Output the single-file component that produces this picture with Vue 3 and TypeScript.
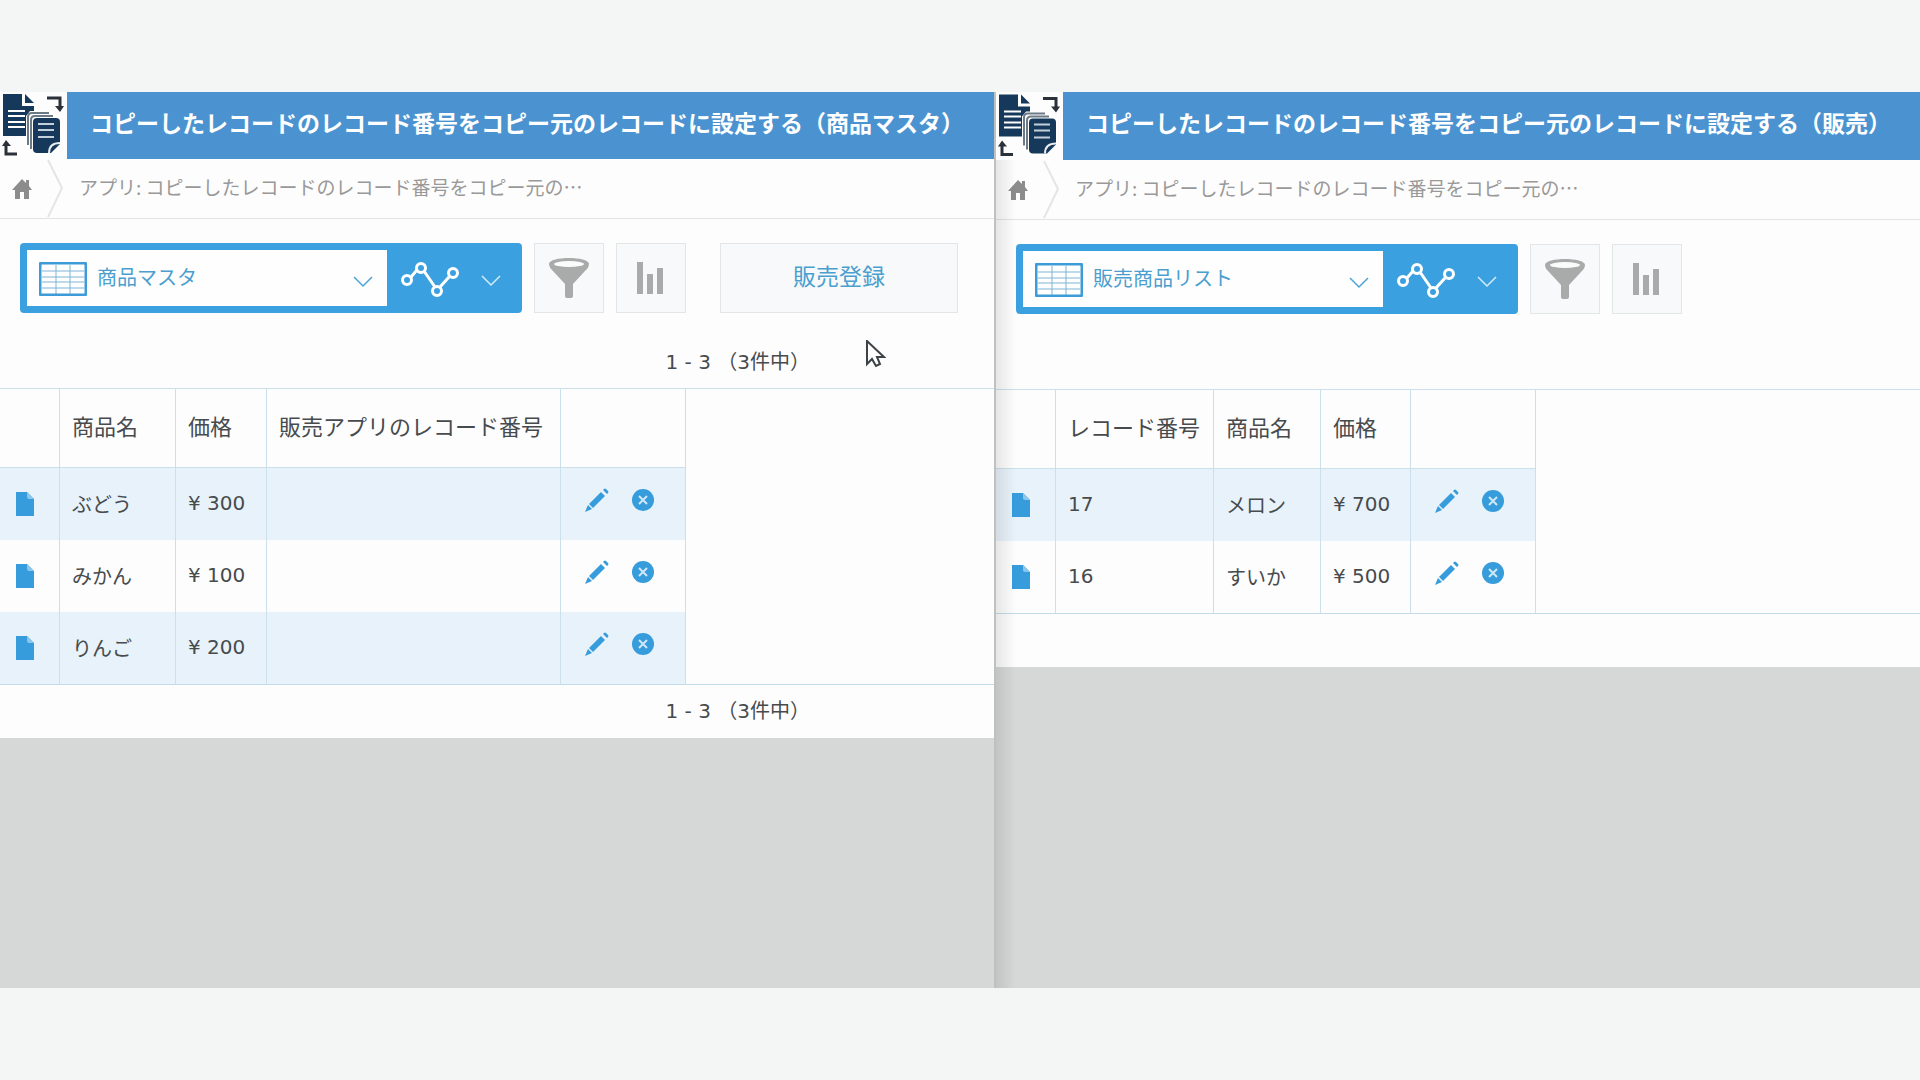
<script setup lang="ts">
interface Column {
  label: string
  width: number
}

interface Pane {
  id: string
  title: string
  view: string
  action?: string
  pager?: string
  columns: Column[]
  rows: string[][]
}

const crumb = 'アプリ: コピーしたレコードのレコード番号をコピー元の…'

const panes: Pane[] = [
  {
    id: 'master',
    title: 'コピーしたレコードのレコード番号をコピー元のレコードに設定する（商品マスタ）',
    view: '商品マスタ',
    action: '販売登録',
    pager: '1 - 3 （3件中）',
    columns: [
      { label: '商品名', width: 116 },
      { label: '価格', width: 91 },
      { label: '販売アプリのレコード番号', width: 294 },
    ],
    rows: [
      ['ぶどう', '¥ 300', ''],
      ['みかん', '¥ 100', ''],
      ['りんご', '¥ 200', ''],
    ],
  },
  {
    id: 'sales',
    title: 'コピーしたレコードのレコード番号をコピー元のレコードに設定する（販売）',
    view: '販売商品リスト',
    columns: [
      { label: 'レコード番号', width: 158 },
      { label: '商品名', width: 107 },
      { label: '価格', width: 90 },
    ],
    rows: [
      ['17', 'メロン', '¥ 700'],
      ['16', 'すいか', '¥ 500'],
    ],
  },
]
</script>

<template>
  <main class="page">
    <section v-for="pane in panes" :key="pane.id" class="pane" :class="pane.id">
      <div class="sheet">
        <header class="head">
          <svg class="logo" viewBox="0 0 67 67" aria-hidden="true">
            <path d="M3 2H22V14H34V44H3Z" fill="#16385a" />
            <path d="M25 2L34 11H25Z" fill="#16385a" />
            <path d="M8 19H25M8 24H25M8 30H25M8 35H25" stroke="#fff" stroke-width="2" />
            <path d="M30 19H53L62 27V50L50 63H35L26 54V24Z" fill="#fff" />
            <path d="M28 53V25Q28 21 32 21H49M31 57V28Q31 24 35 24H53" fill="none" stroke="#6c7a86" stroke-width="2" />
            <path d="M37 26H56Q60 26 60 30V52L51 61H37Q33 61 33 57V30Q33 26 37 26Z" fill="#16385a" />
            <path d="M49 61Q49 51 60 51" fill="none" stroke="#e8eef2" stroke-width="2" />
            <path d="M38 32H54M38 38H54M38 45H54" stroke="#c3d0da" stroke-width="2" />
            <path d="M47 6H60V15" fill="none" stroke="#2b3138" stroke-width="3" />
            <path d="M55 14H64L60 20Z" fill="#2b3138" />
            <path d="M17 62H6V53" fill="none" stroke="#2b3138" stroke-width="3" />
            <path d="M2 54H11L6 48Z" fill="#2b3138" />
          </svg>
          <h1 class="title">{{ pane.title }}</h1>
        </header>

        <nav class="crumbs">
          <a class="home" href="#" aria-label="ホーム">
            <svg viewBox="0 0 20 22" width="20" height="22" aria-hidden="true">
              <path d="M10 1L14 5V2H17V8L20 12H17V21H12V14H8V21H3V12H0Z" fill="#8c8c8c" />
            </svg>
          </a>
          <svg class="sep" viewBox="0 0 18 59" aria-hidden="true">
            <path d="M1 1L15 29L1 58" fill="none" stroke="#e4e6e6" stroke-width="2" />
          </svg>
          <a class="crumb" href="#">{{ crumb }}</a>
        </nav>

        <div class="tools">
          <div class="switcher">
            <label class="view">
              <svg width="48" height="34" viewBox="0 0 48 34" aria-hidden="true">
                <path d="M3 9H45M3 15H45M3 20H45M3 26H45M17 3V32M31 3V32" stroke="#7fb4d4" stroke-width="1" />
                <rect x="1" y="1" width="46" height="32" rx="2" fill="none" stroke="#3d9bd8" stroke-width="3" />
              </svg>
              <select class="picker" aria-label="一覧">
                <option>{{ pane.view }}</option>
              </select>
              <svg class="caret" width="20" height="20" viewBox="0 0 20 20" aria-hidden="true">
                <path d="M1 8L10 17L19 8" fill="none" stroke="#4ba3d6" stroke-width="1.5" />
              </svg>
            </label>
            <button class="graph" type="button" aria-label="グラフ">
              <svg width="60" height="40" viewBox="0 0 60 40" fill="none" stroke="#fff" aria-hidden="true">
                <path d="M11 19L17 12M24 13L35 29M40 29L49 19" stroke-width="3" />
                <circle cx="7" cy="22" r="4.5" stroke-width="3" />
                <circle cx="21" cy="10" r="4.5" stroke-width="3" />
                <circle cx="37" cy="33" r="4.5" stroke-width="3" />
                <circle cx="53" cy="15" r="4.5" stroke-width="3" />
              </svg>
              <svg width="20" height="20" viewBox="0 0 20 20" aria-hidden="true">
                <path d="M1 8L10 17L19 8" fill="none" stroke="#d4ecfa" stroke-width="1.5" />
              </svg>
            </button>
          </div>
          <button class="tool" type="button" aria-label="絞り込み">
            <svg width="42" height="42" viewBox="0 0 42 42" aria-hidden="true">
              <path d="M1 7C1 -1 41 -1 41 7C41 10 39 12 37 14L25 27V39Q25 41 23 41H19Q17 41 17 39V27L5 14C3 12 1 10 1 7Z" fill="#a9abab" />
              <ellipse cx="21" cy="7" rx="15" ry="3" fill="#fafbfb" />
            </svg>
          </button>
          <button class="tool" type="button" aria-label="集計">
            <svg width="28" height="34" viewBox="0 0 28 34" aria-hidden="true">
              <path d="M0 1H6V33H0ZM10 13H16V33H10ZM20 7H26V33H20Z" fill="#a9abab" />
            </svg>
          </button>
          <button v-if="pane.action" class="action" type="button">{{ pane.action }}</button>
        </div>

        <div class="pager top">{{ pane.pager }}</div>

        <div class="list">
          <table>
            <colgroup>
              <col class="icon-col" />
              <col v-for="c in pane.columns" :key="c.label" :style="{ width: c.width + 'px' }" />
              <col class="edit-col" />
            </colgroup>
            <thead>
              <tr>
                <th></th>
                <th v-for="c in pane.columns" :key="c.label" scope="col">{{ c.label }}</th>
                <th></th>
              </tr>
            </thead>
            <tbody>
              <tr v-for="(row, r) in pane.rows" :key="r">
                <td class="open">
                  <a href="#" aria-label="詳細">
                    <svg width="18" height="24" viewBox="0 0 18 24" aria-hidden="true">
                      <path d="M0 0H11L18 7V24H0Z" fill="#369cdc" />
                      <path d="M11 0L18 7H13Q11 7 11 5Z" fill="#8cc6ea" />
                    </svg>
                  </a>
                </td>
                <td v-for="(cell, i) in row" :key="i">{{ cell }}</td>
                <td>
                  <div class="edit">
                    <button type="button" aria-label="編集">
                      <svg width="24" height="24" viewBox="0 0 24 24" fill="#369cdc" aria-hidden="true">
                        <path d="M16 4L20 8L8 20L4 16Z" />
                        <path d="M18 2L19 1Q20 0 21 1L23 3Q24 4 23 5L22 6Z" />
                        <path d="M3 17L7 21L0 24Z" />
                      </svg>
                    </button>
                    <button type="button" aria-label="削除">
                      <svg width="24" height="24" viewBox="0 0 24 24" aria-hidden="true">
                        <circle cx="12" cy="12" r="11" fill="#369cdc" />
                        <path d="M8 8L16 16M16 8L8 16" stroke="#cfe8f7" stroke-width="2" />
                      </svg>
                    </button>
                  </div>
                </td>
              </tr>
            </tbody>
          </table>
        </div>

        <div class="pager">{{ pane.pager }}</div>
      </div>

      <svg v-if="pane.action" class="cursor" width="20" height="28" viewBox="0 0 20 28" aria-hidden="true">
        <path d="M1 1V24L6 19L10 26L14 24L11 17H18Z" fill="#fff" stroke="#3c4246" stroke-width="2" />
      </svg>
    </section>
  </main>
</template>

<style>
body {
  margin: 0;
  background: #f4f6f5;
}
</style>

<style scoped>
.page {
  box-sizing: border-box;
  min-height: 100vh;
  padding: 92px 0;
  display: grid;
  grid-template-columns: 994fr 926fr;
  background: #f4f6f5;
  color: #474b4d;
  font-family: "Noto Sans CJK JP", sans-serif;
  font-size: 20px;
}

.pane {
  position: relative;
  min-width: 0;
  background: #d6d8d7;
}

.pane.sales {
  border-left: 2px solid #bfc1c1;
}

.pane.sales::before {
  content: "";
  position: absolute;
  inset: 68px auto 0 0;
  width: 20px;
  background: linear-gradient(to right, rgba(0, 0, 0, 0.09), rgba(0, 0, 0, 0));
  pointer-events: none;
}

.sheet {
  background: #fdfdfd;
}

.head {
  display: flex;
  height: 67px;
  background: #4b93d0;
}

.sales .head {
  height: 68px;
}

.logo {
  flex: none;
  width: 67px;
  height: 100%;
  background: #fdfdfd;
}

.title {
  margin: 0;
  padding: 0 0 8px 23px;
  align-self: center;
  overflow: hidden;
  color: #fff;
  font-size: 23px;
  font-weight: 700;
  line-height: 32px;
  white-space: nowrap;
}

.crumbs {
  display: flex;
  align-items: center;
  height: 59px;
  border-bottom: 1px solid #e2e4e4;
  overflow: hidden;
}

.home {
  display: flex;
  padding: 0 15px 0 12px;
}

.sep {
  flex: none;
  width: 18px;
  height: 59px;
}

.crumb {
  padding: 0 0 4px 14px;
  color: #999;
  font-size: 19px;
  line-height: 28px;
  text-decoration: none;
  white-space: nowrap;
}

.tools {
  display: flex;
  padding: 24px 20px 0;
}

button {
  margin: 0;
  padding: 0;
  border: 0;
  background: none;
  font: inherit;
  cursor: pointer;
}

.switcher {
  box-sizing: border-box;
  display: flex;
  width: 502px;
  height: 70px;
  padding: 7px 0 7px 7px;
  border-radius: 4px;
  background: #3ba0df;
}

.view {
  box-sizing: border-box;
  display: flex;
  align-items: center;
  width: 360px;
  padding: 2px 14px 0 12px;
  background: #fefefe;
}

.picker {
  flex: 1;
  min-width: 0;
  height: 40px;
  margin: 0;
  padding: 0 0 6px 10px;
  border: 0;
  appearance: none;
  background: none;
  color: #4a9fce;
  font: inherit;
}

.caret {
  pointer-events: none;
}

.graph {
  display: flex;
  align-items: center;
  gap: 21px;
  padding-left: 13px;
}

.tool,
.action {
  box-sizing: border-box;
  display: flex;
  align-items: center;
  justify-content: center;
  height: 70px;
  border: 1px solid #e3e6e7;
  background: #f8f9fb;
}

.tool {
  width: 70px;
  margin-left: 12px;
}

.action {
  width: 238px;
  margin-left: 34px;
  padding-bottom: 6px;
  color: #4a9fce;
  font-size: 23px;
}

.pager {
  box-sizing: border-box;
  height: 53px;
  padding: 11px 184px 12px 0;
  font-family: "DejaVu Sans", "Noto Sans CJK JP", sans-serif;
  line-height: 30px;
  text-align: right;
}

.pager.top {
  height: 75px;
  padding-top: 34px;
}

.list {
  border-top: 1px solid #cbe0ea;
  border-bottom: 1px solid #c3dcea;
}

table {
  width: min-content;
  table-layout: fixed;
  border-collapse: separate;
  border-spacing: 0;
}

.icon-col {
  width: 60px;
}

.edit-col {
  width: 125px;
}

th,
td {
  box-sizing: border-box;
  padding: 0 0 2px 12px;
  border-right: 1px solid #cbe0ea;
  text-align: left;
  white-space: nowrap;
}

th {
  height: 79px;
  padding-bottom: 6px;
  border-bottom: 1px solid #cbe0ea;
  font-size: 22px;
  font-weight: 400;
}

td {
  height: 72px;
  font-family: "DejaVu Sans", "Noto Sans CJK JP", sans-serif;
}

tbody tr:nth-child(odd) {
  background: #e8f2fa;
}

td.open {
  padding: 0 0 0 16px;
}

.open a {
  display: flex;
}

.edit {
  display: flex;
  gap: 22px;
  padding: 0 0 6px 12px;
}

.edit button {
  display: flex;
}

.cursor {
  position: absolute;
  top: 248px;
  left: 866px;
}
</style>
